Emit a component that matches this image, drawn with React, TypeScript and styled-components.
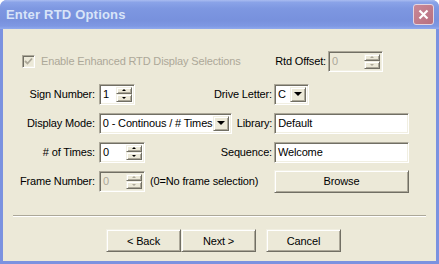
import styled, { createGlobalStyle } from 'styled-components';

const GlobalStyle = createGlobalStyle`
  body {
    margin: 0;
    background: #ffffff;
    font-family: 'Liberation Sans', Arial, sans-serif;
    font-size: 11px;
    letter-spacing: -0.15px;
  }
`;

const face = '#ECE9D8';

const Window = styled.div`
  width: 439px;
  height: 264px;
  display: flex;
  flex-direction: column;
  background: #7b92e0;
  border-radius: 7px 7px 0 0;
  overflow: hidden;
`;

const TitleBar = styled.div`
  height: 29px;
  flex: none;
  display: flex;
  align-items: center;
  justify-content: space-between;
  padding: 0 5px 0 6px;
  background: linear-gradient(
    to bottom,
    #a9bcf0 0%,
    #8aa3e8 8%,
    #7d97e1 30%,
    #7891dd 70%,
    #7e98e3 90%,
    #90aaee 100%
  );
`;

const Title = styled.span`
  color: #d8e4f8;
  font-weight: bold;
  font-size: 13px;
  letter-spacing: 0.2px;
`;

const CloseButton = styled.div`
  width: 19px;
  height: 19px;
  border: 1px solid #e4d5e0;
  border-radius: 3px;
  background: linear-gradient(135deg, #c98897, #b87080);
  display: flex;
  align-items: center;
  justify-content: center;
`;

const Body = styled.div`
  flex: 1;
  margin: 0 3px 3px;
  background: ${face};
  padding-top: 21px;
  display: flex;
  flex-direction: column;
`;

const Row = styled.div<{ $top?: number; $right?: number }>`
  height: 22px;
  display: flex;
  align-items: center;
  margin-top: ${(p) => p.$top ?? 7}px;
  margin-right: ${(p) => p.$right ?? 27}px;
`;

const LabelCell = styled.div`
  width: 92px;
  text-align: right;
  white-space: nowrap;
`;

const Middle = styled.div<{ $start?: boolean }>`
  flex: 1;
  margin-left: 4px;
  display: flex;
  align-items: center;
  justify-content: ${(p) => (p.$start ? 'flex-start' : 'space-between')};
  gap: 5px;
  white-space: nowrap;
`;

const RightCell = styled.div`
  width: 135px;
  margin-left: 2px;
  display: flex;
`;

const Label = styled.span<{ $disabled?: boolean }>`
  color: ${(p) => (p.$disabled ? '#aca899' : '#000')};
  white-space: nowrap;
`;

const Sunken = styled.div<{ $w?: number; $disabled?: boolean; $gap?: number }>`
  box-sizing: border-box;
  width: ${(p) => (p.$w ? `${p.$w}px` : '100%')};
  height: 21px;
  flex: none;
  margin-left: ${(p) => p.$gap ?? 0}px;
  display: flex;
  border: 1px solid;
  border-color: #aca899 #ffffff #ffffff #aca899;
  box-shadow: inset 1px 1px #716f64, inset -1px -1px #f1efe2;
  background: ${(p) => (p.$disabled ? face : '#fff')};
  color: ${(p) => (p.$disabled ? '#aca899' : '#000')};
  padding: 2px;
`;

const FieldText = styled.div`
  flex: 1;
  min-width: 0;
  padding-left: 1px;
  line-height: 15px;
  overflow: hidden;
  white-space: nowrap;
`;

const SpinColumn = styled.div`
  width: 16px;
  display: flex;
  flex-direction: column;
`;

const RaisedMini = styled.div`
  flex: 1;
  box-sizing: border-box;
  background: ${face};
  border: 1px solid;
  border-color: #f1efe2 #716f64 #716f64 #f1efe2;
  box-shadow: inset 1px 1px #fff, inset -1px -1px #aca899;
  display: flex;
  align-items: center;
  justify-content: center;
`;

const Arrow = styled.div<{ $up?: boolean; $disabled?: boolean; $size?: number }>`
  width: 0;
  height: 0;
  border-left: ${(p) => p.$size ?? 2}px solid transparent;
  border-right: ${(p) => p.$size ?? 2}px solid transparent;
  ${(p) =>
    p.$up
      ? `border-bottom: ${p.$size ?? 2}px solid ${p.$disabled ? '#aca899' : '#000'};`
      : `border-top: ${p.$size ?? 2}px solid ${p.$disabled ? '#aca899' : '#000'};`}
`;

const ComboButton = styled(RaisedMini)`
  width: 16px;
  flex: none;
`;

const Checkbox = styled.div`
  box-sizing: border-box;
  width: 13px;
  height: 13px;
  border: 1px solid;
  border-color: #aca899 #fff #fff #aca899;
  box-shadow: inset 1px 1px #716f64, inset -1px -1px #f1efe2;
  background: ${face};
  display: flex;
  align-items: center;
  justify-content: center;
`;

const CheckRow = styled.div`
  display: flex;
  align-items: center;
  gap: 6px;
  margin-left: 19px;
  flex: 1;
`;

const Separator = styled.div`
  margin: 23px 10px 0;
  height: 0;
  border-top: 1px solid #aca899;
  border-bottom: 1px solid #fff;
`;

const ButtonRow = styled.div`
  display: flex;
  margin: 12px 0 0 103px;
`;

const PushButton = styled.div<{ $w?: number; $gap?: number }>`
  box-sizing: border-box;
  width: ${(p) => p.$w ?? 75}px;
  height: 23px;
  margin-left: ${(p) => p.$gap ?? 0}px;
  background: ${face};
  border: 1px solid;
  border-color: #f1efe2 #716f64 #716f64 #f1efe2;
  box-shadow: inset 1px 1px #fff, inset -1px -1px #aca899;
  display: flex;
  align-items: center;
  justify-content: center;
  color: #000;
`;

const SpinEdit = ({
  value,
  w,
  disabled,
  gap,
}: {
  value: string;
  w: number;
  disabled?: boolean;
  gap?: number;
}) => (
  <Sunken $w={w} $disabled={disabled} $gap={gap}>
    <FieldText>{value}</FieldText>
    <SpinColumn>
      <RaisedMini>
        <Arrow $up $disabled={disabled} />
      </RaisedMini>
      <RaisedMini>
        <Arrow $disabled={disabled} />
      </RaisedMini>
    </SpinColumn>
  </Sunken>
);

const Combo = ({ value, w }: { value: string; w: number }) => (
  <Sunken $w={w}>
    <FieldText>{value}</FieldText>
    <ComboButton>
      <Arrow $size={4} />
    </ComboButton>
  </Sunken>
);

export default function App() {
  return (
    <>
      <GlobalStyle />
      <Window>
        <TitleBar>
          <Title>Enter RTD Options</Title>
          <CloseButton>
            <svg width="11" height="11" viewBox="0 0 11 11">
              <path d="M1.5 1.5 L9.5 9.5 M9.5 1.5 L1.5 9.5" stroke="#fff" strokeWidth="2.2" />
            </svg>
          </CloseButton>
        </TitleBar>
        <Body>
          <Row $top={0} $right={53}>
            <CheckRow>
              <Checkbox>
                <svg width="9" height="9" viewBox="0 0 9 9">
                  <path d="M1 4 L3.5 6.5 L8 1.5" stroke="#aca899" strokeWidth="1.8" fill="none" />
                </svg>
              </Checkbox>
              <Label $disabled>Enable Enhanced RTD Display Selections</Label>
            </CheckRow>
            <Label>Rtd Offset:</Label>
            <SpinEdit value="0" w={55} disabled gap={2} />
          </Row>
          <Row $top={11}>
            <LabelCell>Sign Number:</LabelCell>
            <Middle>
              <SpinEdit value="1" w={36} />
              <Label>Drive Letter:</Label>
            </Middle>
            <RightCell>
              <Combo value="C" w={35} />
            </RightCell>
          </Row>
          <Row>
            <LabelCell>Display Mode:</LabelCell>
            <Middle>
              <Combo value="0 - Continous / # Times" w={133} />
              <Label>Library:</Label>
            </Middle>
            <RightCell>
              <Sunken>
                <FieldText>Default</FieldText>
              </Sunken>
            </RightCell>
          </Row>
          <Row>
            <LabelCell># of Times:</LabelCell>
            <Middle>
              <SpinEdit value="0" w={46} />
              <Label>Sequence:</Label>
            </Middle>
            <RightCell>
              <Sunken>
                <FieldText>Welcome</FieldText>
              </Sunken>
            </RightCell>
          </Row>
          <Row>
            <LabelCell>Frame Number:</LabelCell>
            <Middle $start>
              <SpinEdit value="0" w={46} disabled />
              <Label>(0=No frame selection)</Label>
            </Middle>
            <RightCell>
              <PushButton $w={135}>Browse</PushButton>
            </RightCell>
          </Row>
          <Separator />
          <ButtonRow>
            <PushButton>&lt; Back</PushButton>
            <PushButton>Next &gt;</PushButton>
            <PushButton $gap={10}>Cancel</PushButton>
          </ButtonRow>
        </Body>
      </Window>
    </>
  );
}
